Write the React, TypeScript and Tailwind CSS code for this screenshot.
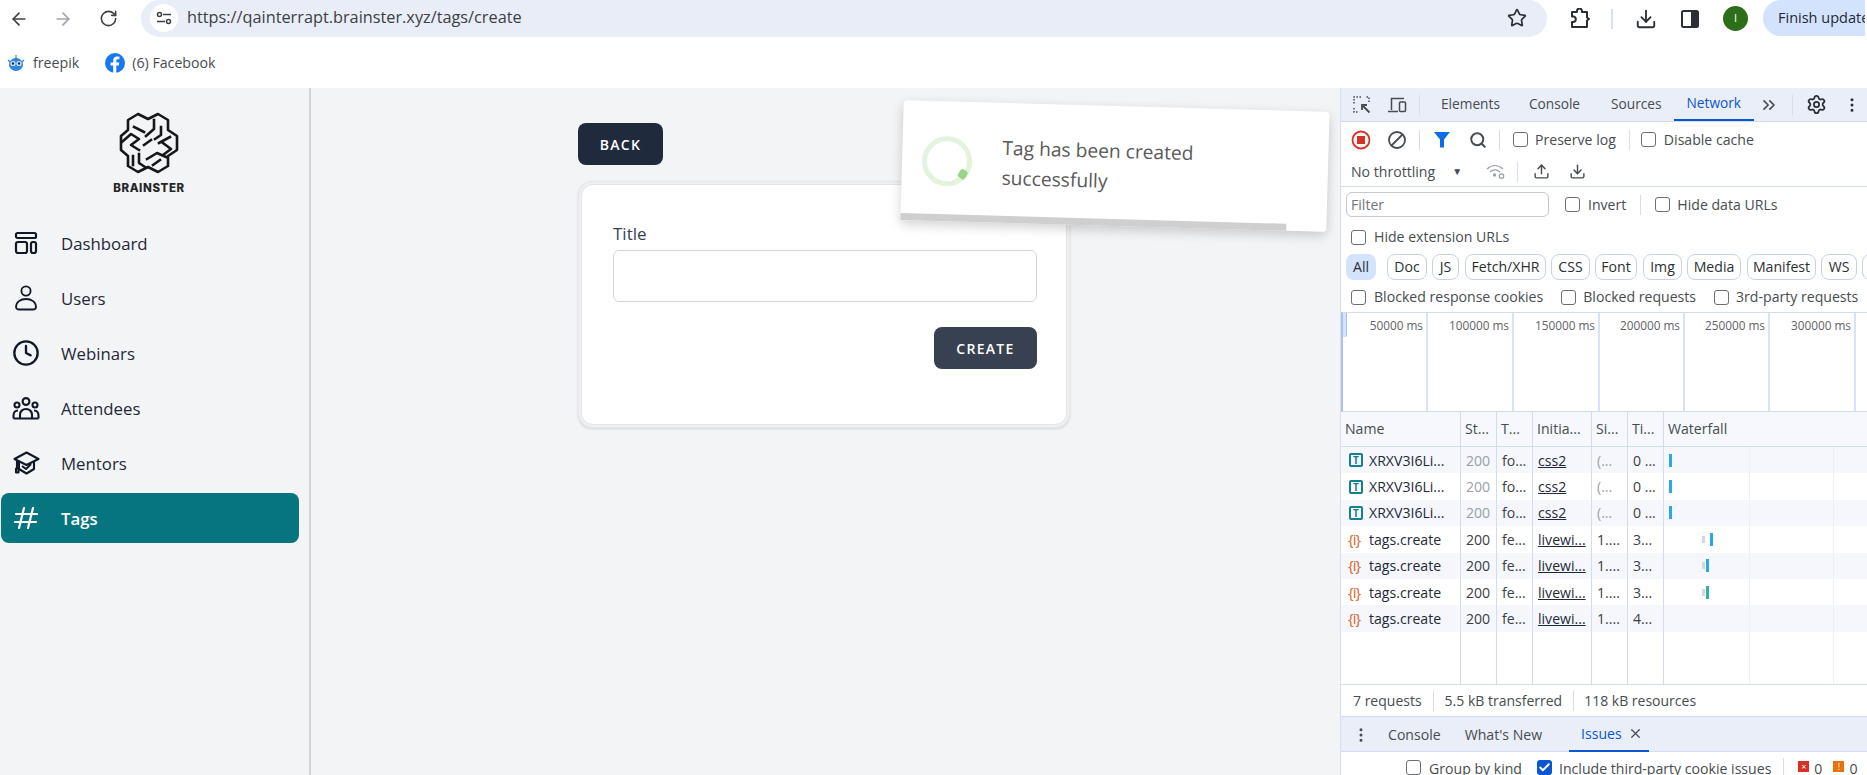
import React from 'react';
import {
  ArrowLeft,
  ArrowRight,
  RotateCw,
  Star,
  Download,
  Clock,
  Search,
  Upload,
  Settings,
  MoreVertical,
  ChevronsRight,
  X,
  Check,
} from 'lucide-react';

const BrainLogo = () => (
  <svg width="60" height="62" viewBox="0 0 60 62" fill="none" stroke="#171717" strokeWidth="2.6" strokeLinejoin="round" strokeLinecap="square">
    <path d="M19 2 L29 7 L39 2 L49 8 L49 18 L58 24 L58 38 L49 44 L49 54 L39 60 L29 55 L19 60 L9 54 L9 44 L2 38 L2 24 L9 18 L9 8 Z" />
    <path d="M15 15 L25 20 M35 8 L35 17 L27 24 M42 15 L42 23 L36 27" />
    <path d="M3 30 L12 22 L20 27 L12 33 L20 38 M40 31 L51 25 M44 31 L52 37 L44 43" />
    <path d="M25 33 L32 28" />
    <path d="M14 44 L14 53 M20 42 L20 51 L26 55 M28 47 L38 41 L47 45 M34 53 L41 48" />
  </svg>
);

const DashboardIcon = () => (
  <svg width="24" height="24" viewBox="0 0 24 24" fill="none" stroke="#111827" strokeWidth="2.2">
    <rect x="2" y="2" width="20" height="5" rx="1.5" />
    <rect x="2" y="11" width="11" height="11" rx="2" />
    <rect x="17" y="11" width="5" height="11" rx="2" />
  </svg>
);

const UserIcon = () => (
  <svg width="24" height="26" viewBox="0 0 24 26" fill="none" stroke="#111827" strokeWidth="1.8">
    <circle cx="12" cy="6" r="4.6" />
    <path d="M2 22c0-5 4.500-8 10-8s10 3 10 8c0 2-2 2.500-3 2.500H5c-1 0-3-.5-3-2.500z" />
  </svg>
);

const PeopleIcon = () => (
  <svg width="28" height="23" viewBox="0 0 28 23" fill="none" stroke="#111827" strokeWidth="2.1">
    <circle cx="14" cy="4.500" r="3.400" />
    <circle cx="5" cy="8" r="2.500" />
    <circle cx="23" cy="8" r="2.500" />
    <path d="M8 21.500v-4c0-3 2.500-5.500 6-5.500s6 2.500 6 5.500v4" />
    <path d="M1.500 21.500v-3c0-3 1.500-5 4.500-5M26.500 21.500v-3c0-3-1.500-5-4.500-5M1.500 21.500h25" />
  </svg>
);

const MentorIcon = () => (
  <svg width="27" height="24" viewBox="0 0 27 24" fill="none" stroke="#111827" strokeWidth="2.1" strokeLinejoin="round">
    <path d="M13.500 1.500 L25.500 8 L13.500 14 L1.500 8 Z" />
    <path d="M6 11v7l7.500 4.500L21 18v-7" />
    <path d="M4 9v9M3 17.500h2.500v4H3z" />
    <path d="M9 15l4 3 5-5" />
  </svg>
);

const HashIcon = () => (
  <svg width="24" height="24" viewBox="0 0 24 24" fill="none" stroke="#ffffff" strokeWidth="2.2" strokeLinecap="round">
    <path d="M10 2 L5 22 M19 2 L14 22 M2 8 H23 M1 16 H22" />
  </svg>
);

const FreepikIcon = () => (
  <svg width="18" height="18" viewBox="0 0 18 18">
    <ellipse cx="9" cy="10.500" rx="7" ry="6.500" fill="#2f86e0" />
    <path d="M9 1v4M1 6l2 2M17 6l-2 2" stroke="#2f86e0" strokeWidth="1.300" />
    <circle cx="6" cy="9.500" r="2.600" fill="#dbeafe" />
    <circle cx="12" cy="9.500" r="2.600" fill="#dbeafe" />
    <circle cx="6" cy="9.500" r="1.300" fill="#12345a" />
    <circle cx="12" cy="9.500" r="1.300" fill="#12345a" />
  </svg>
);

const FacebookIcon = () => (
  <svg width="20" height="20" viewBox="0 0 20 20">
    <circle cx="10" cy="10" r="10" fill="#1877f2" />
    <path d="M11.300 20v-7.500h2.500l.5-3h-3V7.800c0-.9.400-1.600 1.700-1.600h1.400V3.600c-.6-.1-1.400-.2-2.200-.2-2.500 0-4 1.500-4 4v2.100H5.500v3h2.700V20z" fill="#ffffff" />
  </svg>
);

const SiteIcon = () => (
  <svg width="16" height="16" viewBox="0 0 16 16" fill="none" stroke="#3c4043" strokeWidth="1.500">
    <path d="M7 4.500h8M1 11.500h8" />
    <circle cx="3.500" cy="4.500" r="2" />
    <circle cx="12.500" cy="11.500" r="2" />
  </svg>
);

const PuzzleIcon = () => (
  <svg width="22" height="22" viewBox="0 0 22 22" fill="none" stroke="#2b2f33" strokeWidth="2" strokeLinejoin="round">
    <path d="M3 4h5V3a2.500 2.500 0 0 1 5 0v1h5v5.500l2 1.500-2 1.500V19H3v-5h1.500a2.800 2.800 0 0 0 0-5.500H3z" />
  </svg>
);

const PanelIcon = () => (
  <svg width="18" height="18" viewBox="0 0 18 18">
    <rect x="1" y="1" width="16" height="16" rx="1.500" fill="none" stroke="#2b2f33" strokeWidth="2" />
    <rect x="10" y="1" width="7" height="16" fill="#2b2f33" />
  </svg>
);

const InspectIcon = () => (
  <svg width="18" height="18" viewBox="0 0 18 18" fill="none" stroke="#474c50" strokeWidth="1.500">
    <path d="M8 1H1v7M16 6V1h-4M1 12v4h5" strokeDasharray="1.500 1.500" />
    <path d="M16.500 16.500L9 9M9 14V9h5" strokeWidth="1.800" />
  </svg>
);

const DeviceIcon = () => (
  <svg width="20" height="18" viewBox="0 0 20 18" fill="none" stroke="#474c50" strokeWidth="1.500">
    <path d="M17 2.500H4.500V14M1 15.500h10" />
    <rect x="12.500" y="6" width="6" height="9.500" rx="1" />
  </svg>
);

const RecordIcon = () => (
  <svg width="20" height="20" viewBox="0 0 20 20">
    <circle cx="10" cy="10" r="8.500" fill="none" stroke="#d93025" strokeWidth="1.800" />
    <rect x="6" y="6" width="8" height="8" fill="#d93025" />
  </svg>
);

const ClearIcon = () => (
  <svg width="20" height="20" viewBox="0 0 20 20" fill="none" stroke="#474c50" strokeWidth="1.800">
    <circle cx="10" cy="10" r="8" />
    <path d="M4.500 15.500L15.500 4.500" />
  </svg>
);

const FilterIcon = () => (
  <svg width="16" height="17" viewBox="0 0 16 17">
    <path d="M0 1h16L10 8.500V16.500H6V8.500z" fill="#0b6ee8" />
  </svg>
);

const WifiIcon = () => (
  <svg width="20" height="16" viewBox="0 0 20 16" fill="none" stroke="#9aa0a6" strokeWidth="1.300">
    <path d="M1 5c5-4.500 11-4.500 16 0M4 8c3-2.500 7-2.500 10 0" />
    <circle cx="15.500" cy="12" r="2.200" />
    <circle cx="8.500" cy="11" r="1" fill="#9aa0a6" />
  </svg>
);

const FontFileIcon = () => (
  <span className="w-[14px] h-[14px] border-2 border-[#12808f] rounded-[2px] flex items-center justify-center text-[10px] font-bold leading-none text-[#12808f]">T</span>
);

const FetchIcon = () => (
  <span className="w-[16px] text-[15px] leading-none font-medium text-[#d9652b] whitespace-nowrap tracking-[-1px]">{'{i}'}</span>
);

const Box = ({ checked }: { checked?: boolean }) =>
  checked ? (
    <span className="w-[15px] h-[15px] rounded-[3px] bg-[#0b57d0] flex items-center justify-center shrink-0">
      <Check size={13} color="#ffffff" strokeWidth={3.500} />
    </span>
  ) : (
    <span className="w-[15px] h-[15px] rounded-[3px] border border-[#6b7075] bg-white shrink-0" />
  );

const Sep = ({ className }: { className: string }) => <span className={`w-px h-[20px] bg-[#d6deee] shrink-0 ${className}`} />;

const navItems = [
  { label: 'Dashboard', icon: <DashboardIcon /> },
  { label: 'Users', icon: <UserIcon /> },
  { label: 'Webinars', icon: <Clock size={28} strokeWidth={2} color="#111827" /> },
  { label: 'Attendees', icon: <PeopleIcon /> },
  { label: 'Mentors', icon: <MentorIcon /> },
  { label: 'Tags', icon: <HashIcon />, active: true },
];

const chips = [
  { label: 'Doc', cls: 'w-[40px] ml-[11px]' },
  { label: 'JS', cls: 'w-[27px] ml-[5px]' },
  { label: 'Fetch/XHR', cls: 'w-[81px] ml-[6px]' },
  { label: 'CSS', cls: 'w-[39px] ml-[5px]' },
  { label: 'Font', cls: 'w-[42px] ml-[5px]' },
  { label: 'Img', cls: 'w-[39px] ml-[6px]' },
  { label: 'Media', cls: 'w-[54px] ml-[5px]' },
  { label: 'Manifest', cls: 'w-[69px] ml-[6px]' },
  { label: 'WS', cls: 'w-[36px] ml-[5px]' },
  { label: '', cls: 'w-[36px] ml-[5px]' },
];

const ticks = ['50000 ms', '100000 ms', '150000 ms', '200000 ms', '250000 ms', '300000 ms'];

const requests = [
  { name: 'XRXV3I6Li...', status: '200', type: 'fo...', init: 'css2', size: '(...', time: '0 ...', font: true, bar: 'ml-[5px]', gray: false },
  { name: 'XRXV3I6Li...', status: '200', type: 'fo...', init: 'css2', size: '(...', time: '0 ...', font: true, bar: 'ml-[5px]', gray: false },
  { name: 'XRXV3I6Li...', status: '200', type: 'fo...', init: 'css2', size: '(...', time: '0 ...', font: true, bar: 'ml-[5px]', gray: false },
  { name: 'tags.create', status: '200', type: 'fe...', init: 'livewi...', size: '1....', time: '3...', bar: 'ml-[5px]', gray: true },
  { name: 'tags.create', status: '200', type: 'fe...', init: 'livewi...', size: '1....', time: '3...', bar: 'ml-[1px]', gray: true },
  { name: 'tags.create', status: '200', type: 'fe...', init: 'livewi...', size: '1....', time: '3...', bar: 'ml-[1px]', gray: true, green: true },
  { name: 'tags.create', status: '200', type: 'fe...', init: 'livewi...', size: '1....', time: '4...', bar: '', gray: false, empty: true },
];

const Toast = () => (
  <div className="absolute left-[902px] top-[106px] w-[426px] h-[120px] rotate-[1.6deg] bg-white rounded-[4px] shadow-[0_4px_12px_rgba(0,0,0,0.18)] flex items-center z-10">
    <span className="relative ml-[20px] w-[50px] h-[50px] rounded-full border-[5px] border-[#e4f3dd] shrink-0">
      <span className="absolute right-[0px] bottom-[3px] w-[8px] h-[9px] rounded-[2px] bg-[#9ad488] rotate-[30deg]" />
    </span>
    <p className="ml-[30px] w-[250px] text-[19.200px] leading-[30px] font-medium text-[#5a5a5a]">Tag has been created successfully</p>
    <span className="absolute left-0 bottom-0 h-[7px] w-[386px] bg-[#cfcfcf]" />
  </div>
);

export default function App() {
  return (
    <div className="relative w-[1867px] h-[775px] overflow-hidden bg-white flex flex-col font-['Open_Sans',sans-serif]">
      {/* browser toolbar */}
      <div className="h-[37px] flex items-center shrink-0 overflow-hidden">
        <div className="w-[141px] flex items-center text-[#3c4043] shrink-0">
          <ArrowLeft size={20} className="ml-[9px] shrink-0" />
          <ArrowRight size={20} className="ml-[24px] text-[#a0a3a7] shrink-0" />
          <RotateCw size={19} className="ml-[26px] shrink-0" />
        </div>
        <div className="w-[1406px] h-[37px] -mt-[1px] bg-[#e9edf7] rounded-full flex items-center shrink-0">
          <span className="ml-[9px] w-[28px] h-[28px] rounded-full bg-white flex items-center justify-center shrink-0"><SiteIcon /></span>
          <span className="ml-[9px] -mt-[1px] text-[16.300px] text-[#3c4043]">https://qainterrapt.brainster.xyz/tags/create</span>
          <Star size={20} strokeWidth={2} className="ml-auto mr-[20px] text-[#2b2f33] shrink-0" />
        </div>
        <span className="ml-[22px] shrink-0"><PuzzleIcon /></span>
        <span className="ml-[20px] w-[2px] h-[20px] bg-[#d6e0f0] shrink-0" />
        <Download size={22} strokeWidth={2} className="ml-[22px] text-[#2b2f33] shrink-0" />
        <span className="ml-[24px] shrink-0"><PanelIcon /></span>
        <span className="ml-[24px] w-[25px] h-[25px] rounded-full bg-[#2c6e1a] flex items-center justify-center text-white text-[11px] shrink-0">I</span>
        <div className="ml-[15px] w-[102px] h-[36px] -mt-[1px] bg-[#d3e3fd] rounded-l-full flex items-center pl-[15px] shrink-0 text-[14.500px] text-[#1f2937] whitespace-nowrap overflow-hidden">Finish update</div>
      </div>

      {/* bookmarks */}
      <div className="h-[51px] flex items-center text-[14.200px] text-[#474c50] shrink-0">
        <span className="ml-[7px]"><FreepikIcon /></span>
        <span className="ml-[8px]">freepik</span>
        <span className="ml-[26px]"><FacebookIcon /></span>
        <span className="ml-[7px]">(6) Facebook</span>
      </div>

      <div className="flex flex-1 min-h-0">
        {/* sidebar */}
        <aside className="w-[311px] shrink-0 bg-[#f3f4f6] border-r-2 border-[#d1d5db] flex flex-col">
          <div className="flex flex-col items-center w-[298px] pt-[24px] h-[130px]">
            <BrainLogo />
            <span className="mt-[7px] text-[11.500px] leading-[14px] font-extrabold text-[#262626] tracking-[0.6px] font-['Inter',sans-serif]">BRAINSTER</span>
          </div>
          <nav className="flex flex-col gap-[5px] ml-[1px] w-[298px]">
            {navItems.map((item) => (
              <div
                key={item.label}
                className={`h-[50px] flex items-center rounded-lg ${item.active ? 'bg-[#06757f] text-white font-semibold' : 'text-[#1f2937]'}`}
              >
                <span className="w-[50px] flex justify-center shrink-0">{item.icon}</span>
                <span className="ml-[10px] pt-[1px] text-[16.800px]">{item.label}</span>
              </div>
            ))}
          </nav>
        </aside>

        {/* main */}
        <main className="w-[1029px] shrink-0 bg-[#f3f4f6] pl-[267px] pt-[35px]">
          <button className="w-[85px] h-[42px] rounded-lg bg-[#1f2a3c] text-white text-[14px] font-semibold tracking-[1.300px]">BACK</button>
          <div className="mt-[16px] w-[492px] h-[247px] p-[2px] rounded-[14px] border border-[#e5e7eb] bg-[#eef0f2] shadow-sm">
            <div className="h-full bg-white rounded-[12px] border border-[#e3e4e6] pt-[37px] pl-[31px]">
              <label className="block text-[17px] leading-[24px] text-[#374151]">Title</label>
              <input className="block mt-[4px] w-[424px] h-[52px] bg-white border border-[#d1d5db] rounded-md" />
              <div className="flex justify-end mt-[25px] w-[424px]">
                <button className="w-[103px] h-[42px] rounded-lg bg-[#374151] text-white text-[14px] font-semibold tracking-[1.300px]">CREATE</button>
              </div>
            </div>
          </div>
        </main>

        {/* devtools */}
        <section className="w-[527px] shrink-0 bg-white border-l border-[#d6deee] flex flex-col text-[14.100px] text-[#474c50] whitespace-nowrap overflow-hidden">
          <div className="h-[34px] bg-[#e9eef8] border-b border-[#d3dcee] flex items-center shrink-0 text-[13.700px]">
            <span className="ml-[12px]"><InspectIcon /></span>
            <span className="ml-[16px]"><DeviceIcon /></span>
            <Sep className="ml-[12px]" />
            <span className="ml-[21px]">Elements</span>
            <span className="ml-[29px]">Console</span>
            <span className="ml-[31px]">Sources</span>
            <span className="ml-[12px] px-[13px] h-[33px] flex items-center text-[#0b57d0] border-b-2 border-[#0b57d0]">Network</span>
            <ChevronsRight size={20} className="ml-[5px] shrink-0" />
            <Sep className="ml-[13px]" />
            <Settings size={21} className="ml-[13px] text-[#2b2f33] shrink-0" />
            <MoreVertical size={18} className="ml-[16px] text-[#2b2f33] shrink-0" />
          </div>
          <div className="h-[35px] flex items-center shrink-0">
            <span className="ml-[10px]"><RecordIcon /></span>
            <span className="ml-[16px]"><ClearIcon /></span>
            <Sep className="ml-[12px]" />
            <span className="ml-[14px]"><FilterIcon /></span>
            <Search size={18} strokeWidth={2.600} className="ml-[19px] shrink-0" />
            <Sep className="ml-[12px]" />
            <span className="ml-[13px] flex"><Box /></span>
            <span className="ml-[7px]">Preserve log</span>
            <Sep className="ml-[13px]" />
            <span className="ml-[11px] flex"><Box /></span>
            <span className="ml-[8px]">Disable cache</span>
          </div>
          <div className="h-[30px] border-b border-[#d3dcee] flex items-center shrink-0">
            <span className="ml-[10px]">No throttling</span>
            <span className="ml-[17px] text-[10px]">▼</span>
            <span className="ml-[24px]"><WifiIcon /></span>
            <Sep className="ml-[11px]" />
            <Upload size={17} strokeWidth={2} className="ml-[15px] shrink-0" />
            <Download size={17} strokeWidth={2} className="ml-[19px] shrink-0" />
          </div>
          <div className="h-[35px] flex items-center shrink-0">
            <span className="ml-[5px] w-[203px] h-[25px] rounded-[6px] border border-[#c4c7cc] pl-[4px] flex items-center text-[#70757a]">Filter</span>
            <span className="ml-[16px] flex"><Box /></span>
            <span className="ml-[8px]">Invert</span>
            <Sep className="ml-[14px]" />
            <span className="ml-[14px] flex"><Box /></span>
            <span className="ml-[7px]">Hide data URLs</span>
          </div>
          <div className="h-[30px] flex items-center shrink-0">
            <span className="ml-[10px] flex"><Box /></span>
            <span className="ml-[8px]">Hide extension URLs</span>
          </div>
          <div className="h-[30px] flex items-center shrink-0 text-[#2b2f33]">
            <span className="ml-[5px] w-[30px] h-[26px] rounded-[8px] bg-[#d3e3fd] flex items-center justify-center font-medium shrink-0">All</span>
            {chips.map((c) => (
              <span key={c.label} className={`h-[26px] rounded-[8px] border border-[#c5d3ea] flex items-center justify-center shrink-0 ${c.cls}`}>{c.label}</span>
            ))}
          </div>
          <div className="h-[30px] flex items-center shrink-0">
            <span className="ml-[10px] flex"><Box /></span>
            <span className="ml-[8px]">Blocked response cookies</span>
            <span className="ml-[18px] flex"><Box /></span>
            <span className="ml-[7px]">Blocked requests</span>
            <span className="ml-[18px] flex"><Box /></span>
            <span className="ml-[7px]">3rd-party requests</span>
          </div>

          {/* overview timeline */}
          <div className="relative h-[100px] border-y border-[#d3dcee] grid grid-cols-[85px_86px_86px_85px_85px_86px_1fr] shrink-0 border-l-2 border-l-[#a9c3f0]">
            {ticks.map((t) => (
              <div key={t} className="border-r-2 border-[#d6e2f6] text-right pr-[3px] pt-[3px] text-[11.800px] leading-[18px] text-[#5f6368]">{t}</div>
            ))}
            <span className="absolute left-0 top-0 w-[4px] h-[24px] bg-[#d3e3fd] rounded-br-[2px] border-r border-[#a9c3f0]" />
          </div>

          {/* request table */}
          <div className="h-[35px] bg-[#f6f8fd] border-b border-[#d3dcee] grid grid-cols-[120px_36px_36px_59px_36px_36px_1fr] shrink-0">
            {['Name', 'St...', 'T...', 'Initia...', 'Si...', 'Ti...', 'Waterfall'].map((h) => (
              <div key={h} className="border-r border-[#d3dcee] last:border-r-0 pl-[4px] flex items-center">{h}</div>
            ))}
          </div>
          <div className="h-[237px] relative shrink-0">
            {requests.map((r, i) => (
              <div key={i} className={`h-[26.400px] grid grid-cols-[120px_36px_36px_59px_36px_36px_1fr] items-center ${i % 2 === 0 ? 'bg-[#f5f7fd]' : 'bg-white'}`}>
                <div className="flex items-center pl-[7px] text-[#1f2937]">
                  <span className="w-[16px] flex justify-center shrink-0">{r.font ? <FontFileIcon /> : <FetchIcon />}</span>
                  <span className="ml-[5px]">{r.name}</span>
                </div>
                <div className={`pl-[5px] ${r.font ? 'text-[#9aa0a6]' : 'text-[#3c4043]'}`}>{r.status}</div>
                <div className="pl-[5px] text-[#3c4043]">{r.type}</div>
                <div className="pl-[5px] underline text-[#1f2937]">{r.init}</div>
                <div className={`pl-[5px] ${r.font ? 'text-[#9aa0a6]' : 'text-[#3c4043]'}`}>{r.size}</div>
                <div className="pl-[5px] text-[#3c4043]">{r.time}</div>
                <div className="flex items-center h-[26px]">
                  {r.font && <span className={`${r.bar} w-[3px] h-[13px] bg-[#2aa9e6]`} />}
                  {!r.font && !r.empty && (
                    <span className="ml-[38px] flex items-center">
                      <span className="w-[3px] h-[7px] bg-[#d5d8dc]" />
                      <span className={`${r.bar} w-[3px] h-[13px] ${r.green ? 'bg-[#2fb3a0]' : 'bg-[#2aa9e6]'}`} />
                    </span>
                  )}
                </div>
              </div>
            ))}
            {/* column rules run on below the rows */}
            <div className="absolute inset-0 grid grid-cols-[120px_36px_36px_59px_36px_36px_86px_84px_1fr] pointer-events-none">
              {[0, 1, 2, 3, 4, 5, 6, 7].map((n) => (
                <span key={n} className={`border-r ${n > 5 ? 'border-[#eaf0fa]' : 'border-[#d3dcee]'}`} />
              ))}
            </div>
          </div>

          <div className="h-[33px] border-y border-[#d3dcee] flex items-center shrink-0 text-[14px]">
            <span className="ml-[12px]">7 requests</span>
            <Sep className="ml-[11px]" />
            <span className="ml-[11px]">5.5 kB transferred</span>
            <Sep className="ml-[11px]" />
            <span className="ml-[10px]">118 kB resources</span>
          </div>
          <div className="h-[35px] bg-[#e9eef8] border-b border-[#d3dcee] flex items-center shrink-0 pt-[1px]">
            <MoreVertical size={18} className="ml-[11px] text-[#474c50] shrink-0" />
            <span className="ml-[18px]">Console</span>
            <span className="ml-[24px]">What's New</span>
            <span className="ml-[27px] h-[34px] pl-[12px] pr-[3px] w-[80px] flex items-center text-[#0b57d0] border-b-2 border-[#0b57d0]">
              Issues
              <X size={15} className="ml-[6px] text-[#474c50] shrink-0" />
            </span>
          </div>
          <div className="flex-1 flex items-start pt-[6px]">
            <span className="ml-[65px] flex mt-[2px]"><Box /></span>
            <span className="ml-[8px]">Group by kind</span>
            <span className="ml-[15px] flex mt-[2px]"><Box checked /></span>
            <span className="ml-[7px]">Include third-party cookie issues</span>
            <Sep className="ml-[12px]" />
            <span className="ml-[14px] mt-[3px] w-[11px] h-[11px] bg-[#d93025] text-white text-[9px] leading-[11px] text-center">×</span>
            <span className="ml-[5px]">0</span>
            <span className="ml-[11px] mt-[3px] w-[11px] h-[11px] bg-[#e8710a] text-white text-[9px] leading-[11px] text-center">!</span>
            <span className="ml-[5px]">0</span>
          </div>
        </section>
      </div>

      <Toast />
    </div>
  );
}
